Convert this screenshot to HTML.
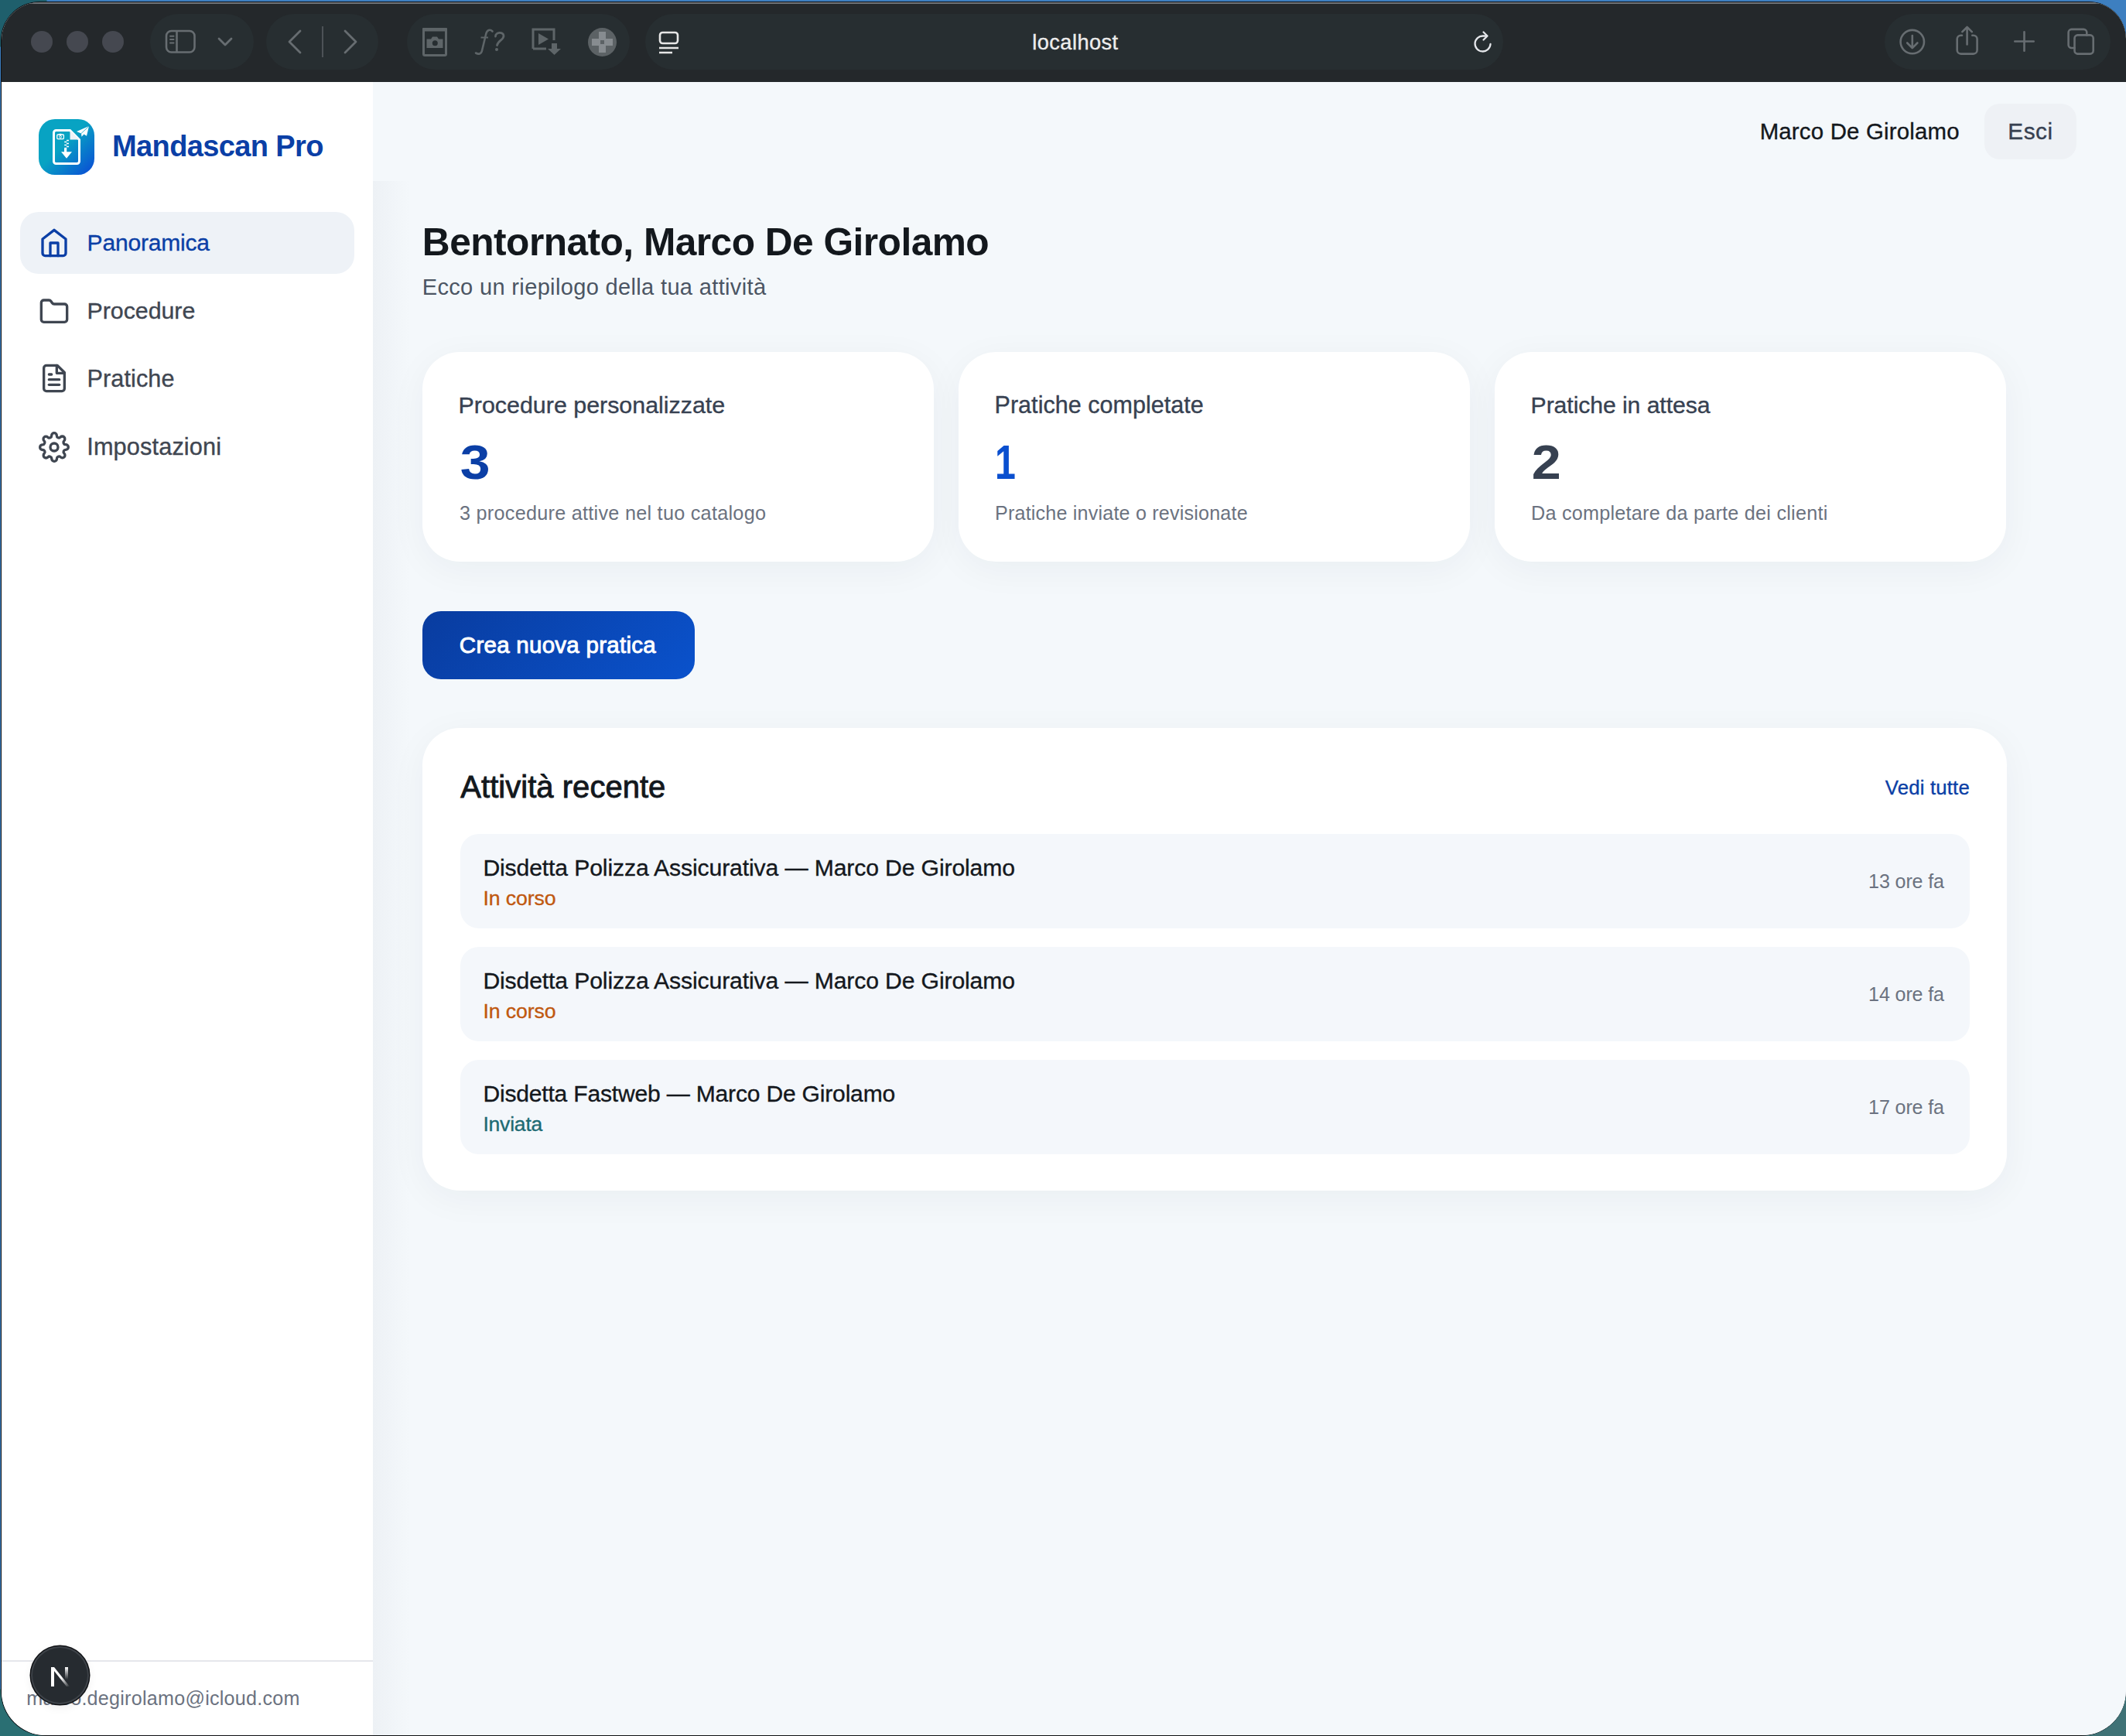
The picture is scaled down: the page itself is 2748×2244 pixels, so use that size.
<!DOCTYPE html>
<html><head><meta charset="utf-8"><style>
*{margin:0;padding:0;box-sizing:border-box}
html,body{width:2748px;height:2244px;overflow:hidden}
body{position:relative;font-family:"Liberation Sans",sans-serif;background:#0e1013}
.abs{position:absolute}
.t{position:absolute;white-space:nowrap}
#desk{position:absolute;inset:0;background:
 radial-gradient(circle at 0 0,#1f5f6c 0,#1f5f6c 60px,transparent 61px),
 radial-gradient(circle at 0 100%,#2a6f73 0,#2a6f73 60px,transparent 61px),
 radial-gradient(circle at 100% 100%,#3f7276 0,#3f7276 60px,transparent 61px),
 #3d7fc0}
#win{position:absolute;left:1px;top:2px;width:2747px;height:2242px;border-radius:50px 48px 58px 58px;overflow:hidden;background:#0e1013;}
#inner{position:absolute;left:1px;top:1px;right:0;bottom:1px;border-radius:49px 47px 57px 57px;overflow:hidden;background:#f4f7fa}
#pg{position:absolute;left:-2px;top:-3px;width:2748px;height:2244px}
#toolbar{position:absolute;left:0;top:0;width:2748px;height:106px;background:#24282b}
#tbline{position:absolute;left:0;top:3px;width:2748px;height:1.5px;background:#6f7377}
#side{position:absolute;left:0;top:106px;width:482px;height:2140px;background:#ffffff}
#main{position:absolute;left:482px;top:106px;width:2266px;height:2140px;background:#f4f8fb}
#mhead{display:none}
#mshade{position:absolute;left:482px;top:234px;width:48px;height:2010px;background:linear-gradient(90deg,#edf1f5,rgba(244,248,251,0))}
.card{background:#fff;box-shadow:0 10px 48px rgba(30,41,59,.047)}
</style></head><body>
<div id="desk"></div>
<div id="win"><div id="inner"><div id="pg">
<div id="toolbar"></div><div id="tbline"></div>
<div class="abs" style="left:194px;top:18px;width:134px;height:72px;border-radius:36.0px;background:#272e31"></div><div class="abs" style="left:344px;top:18px;width:145px;height:72px;border-radius:36.0px;background:#272e31"></div><div class="abs" style="left:526px;top:18px;width:288px;height:72px;border-radius:36.0px;background:#272e31"></div><div class="abs" style="left:834px;top:18px;width:1109px;height:72px;border-radius:36.0px;background:#272e31"></div><div class="abs" style="left:2436px;top:18px;width:292px;height:72px;border-radius:36.0px;background:#272e31"></div><div class="abs" style="left:40px;top:40px;width:28px;height:28px;border-radius:50%;background:#454850"></div><div class="abs" style="left:86px;top:40px;width:28px;height:28px;border-radius:50%;background:#454850"></div><div class="abs" style="left:132px;top:40px;width:28px;height:28px;border-radius:50%;background:#454850"></div><svg class="abs" style="left:212px;top:36px;" width="42" height="34" viewBox="0 0 42 34" fill="none"><rect x="3" y="4" width="36.5" height="27.5" rx="6.5" stroke="#676d71" stroke-width="2.6"/><line x1="16.5" y1="4" x2="16.5" y2="31" stroke="#676d71" stroke-width="2.6"/><path d="M8 10.7h4.5M8 14.9h4.5M8 19.4h4.5" stroke="#676d71" stroke-width="2" stroke-linecap="round"/></svg><svg class="abs" style="left:280px;top:47px;" width="22" height="15" viewBox="0 0 22 15" fill="none"><path d="M3 3l8 8 8-8" stroke="#676d71" stroke-width="2.8" stroke-linecap="round" stroke-linejoin="round"/></svg><svg class="abs" style="left:370px;top:37px;" width="22" height="34" viewBox="0 0 22 34" fill="none"><path d="M18 3L4 17l14 14" stroke="#676d71" stroke-width="2.8" stroke-linecap="round" stroke-linejoin="round"/></svg><div class="abs" style="left:416px;top:34px;width:1.5px;height:40px;background:#4d5257"></div><svg class="abs" style="left:442px;top:37px;" width="22" height="34" viewBox="0 0 22 34" fill="none"><path d="M4 3l14 14L4 31" stroke="#676d71" stroke-width="2.8" stroke-linecap="round" stroke-linejoin="round"/></svg><svg class="abs" style="left:544px;top:34px;" width="36" height="40" viewBox="0 0 36 40" fill="none"><rect x="3.5" y="3.5" width="29" height="34" rx="1.5" stroke="#5e6568" stroke-width="3"/><rect x="2" y="2" width="32" height="4.5" rx="1" fill="#5e6568"/><path d="M7.5 16.5h5.5l2-3h6l2 3h5.5v11.5H7.5z" fill="#5e6568"/><circle cx="18.3" cy="21.8" r="3.5" fill="#272e31"/></svg><svg class="abs" style="left:600px;top:30px;" width="65" height="48" viewBox="0 0 65 48" fill="none"><path d="M36.5 10.5C33.5 7.5 29.5 8.5 28.3 13.5L23 35.5C22 40 18.5 40.5 15 38.5" stroke="#5e6568" stroke-width="2.6" stroke-linecap="round"/><path d="M21.5 18.5H31" stroke="#5e6568" stroke-width="2"/><path d="M40.5 17C40 11.5 51 10.5 51 16.5C51 21.5 43.5 22.5 42.5 28.5" stroke="#5e6568" stroke-width="2.8" stroke-linecap="round"/><circle cx="42" cy="34" r="2" fill="#5e6568"/></svg><svg class="abs" style="left:686px;top:34px;" width="42" height="40" viewBox="0 0 42 40" fill="none"><path d="M3 29V4h27v14" stroke="#5e6568" stroke-width="3"/><path d="M3 29h17" stroke="#5e6568" stroke-width="3"/><path d="M10 9v15l13-7.5z" fill="#5e6568"/><path d="M27 22h7v7h5l-8.5 8-8.5-8h5z" fill="#5e6568"/></svg><svg class="abs" style="left:759px;top:35px;" width="39" height="39" viewBox="0 0 39 39" fill="none"><circle cx="19.5" cy="19.5" r="18.5" fill="#5c6265"/><path d="M15 6h9v9h9v9h-9v9h-9v-9H6v-9h9z" fill="#878c90"/><rect x="17" y="17" width="5" height="5" fill="#5c6265"/></svg><svg class="abs" style="left:851px;top:40px;" width="27" height="30" viewBox="0 0 27 30" fill="none"><rect x="2" y="2" width="23" height="14" rx="3.5" stroke="#e6e6e6" stroke-width="2.6"/><path d="M1 22h25M1 28h17" stroke="#e6e6e6" stroke-width="2.4"/></svg><div class="t" style="left:1334.23px;top:41px;font-size:27.24px;line-height:27.24px;font-weight:400;letter-spacing:0.431px;color:#ededed;-webkit-text-stroke:0.35px currentColor;">localhost</div><svg class="abs" style="left:1903px;top:38px;" width="30" height="32" viewBox="0 0 30 32" fill="none"><path d="M23.5 19a10 10 0 1 1-9.5-10.5h4.5" stroke="#e4e6ea" stroke-width="2.3" stroke-linecap="round"/><path d="M14.5 3.5l5 5-5 5" stroke="#e4e6ea" stroke-width="2.3" stroke-linecap="round" stroke-linejoin="round"/></svg><svg class="abs" style="left:2440px;top:25px" width="300" height="60" viewBox="2440 25 300 60" fill="none" stroke="#676d71" stroke-width="2.6" stroke-linecap="round" stroke-linejoin="round">
<circle cx="2471.8" cy="54.1" r="15.2"/><path d="M2471.8 46v15.5M2465.2 55.5l6.6 6.6 6.6-6.6"/>
<path d="M2536 45.7h-1.5a4.8 4.8 0 0 0-4.8 4.8v14.3a4.8 4.8 0 0 0 4.8 4.8h16.3a4.8 4.8 0 0 0 4.8-4.8V50.5a4.8 4.8 0 0 0-4.8-4.8h-1.5"/>
<path d="M2542.6 57.5V35M2536.4 41.2l6.2-6.2 6.2 6.2"/>
<path d="M2616.5 41.3v24.4M2604.3 53.5h24.4"/>
<path d="M2681.5 62H2677.6a4 4 0 0 1-4-4V41.9a4 4 0 0 1 4-4h15.7a4 4 0 0 1 4 4v3.5"/>
<rect x="2681.5" y="45.4" width="24.2" height="24.2" rx="4"/>
</svg>
<div id="side"></div><div id="main"></div><div id="mhead"></div><div id="mshade"></div>
<svg class="abs" style="left:50px;top:154px" width="72" height="72" viewBox="0 0 72 72">
<defs><linearGradient id="lg" x1="0" y1="0" x2="1" y2="1"><stop offset="0.45" stop-color="#08a3c3"/><stop offset="1" stop-color="#0a48d6"/></linearGradient></defs>
<rect width="72" height="72" rx="21" fill="url(#lg)"/>
<path d="M22.5 14.5h18L52.5 26.5v28a3 3 0 0 1-3 3H22.5a3 3 0 0 1-3-3V17.5a3 3 0 0 1 3-3z" fill="none" stroke="#fff" stroke-width="3"/>
<path d="M40.5 14.5v12h12z" fill="#eef2f6"/>
<rect x="23.8" y="20" width="8.6" height="5.6" rx="1" fill="none" stroke="#fff" stroke-width="1.3"/><rect x="26.5" y="18.8" width="3" height="1.6" fill="#fff"/><circle cx="28.1" cy="22.8" r="1.4" fill="none" stroke="#fff" stroke-width="1"/>
<path d="M36 27.5h3M33.2 29.5h3M36 31.5h3M33.2 33.5h3M36 35.5h3M33.2 37.5h3" stroke="#fff" stroke-width="1.6"/>
<path d="M33 38h3.2v4.3h6.8l-7 8.5-7-8.5h4z" fill="#fff"/>
<path d="M65 9L49 16l6 2.5 0.5 4.2 3-3.2 3.5 2.3z" fill="#fff"/><path d="M65 9L55 18.5" stroke="#08a3c3" stroke-width="0.8"/>
</svg><div class="t" style="left:145.03px;top:170px;font-size:38.06px;line-height:38.06px;font-weight:700;letter-spacing:-0.647px;color:#0b3fa6;">Mandascan Pro</div><div class="abs" style="left:26px;top:274px;width:432px;height:80px;border-radius:24px;background:#eef2f7"></div><svg class="abs" style="left:50px;top:294px" width="40" height="40" viewBox="0 0 24 24" fill="none" stroke="#0b3fa6" stroke-width="2" stroke-linecap="round" stroke-linejoin="round"><path d="m3 9 9-7 9 7v11a2 2 0 0 1-2 2H5a2 2 0 0 1-2-2z"/><polyline points="9 22 9 12 15 12 15 22"/></svg><svg class="abs" style="left:50px;top:383px" width="40" height="40" viewBox="0 0 24 24" fill="none" stroke="#3f4651" stroke-width="2" stroke-linecap="round" stroke-linejoin="round"><path d="M4 20h16a2 2 0 0 0 2-2V8a2 2 0 0 0-2-2h-7.93a2 2 0 0 1-1.66-.9l-.82-1.2A2 2 0 0 0 7.93 3H4a2 2 0 0 0-2 2v13c0 1.1.9 2 2 2Z"/></svg><svg class="abs" style="left:50px;top:469px" width="40" height="40" viewBox="0 0 24 24" fill="none" stroke="#3f4651" stroke-width="2" stroke-linecap="round" stroke-linejoin="round"><path d="M14.5 2H6a2 2 0 0 0-2 2v16a2 2 0 0 0 2 2h12a2 2 0 0 0 2-2V7.5L14.5 2z"/><polyline points="14 2 14 8 20 8"/><line x1="16" y1="13" x2="8" y2="13"/><line x1="16" y1="17" x2="8" y2="17"/><line x1="10" y1="9" x2="8" y2="9"/></svg><svg class="abs" style="left:50px;top:558px" width="40" height="40" viewBox="0 0 24 24" fill="none" stroke="#3f4651" stroke-width="2" stroke-linecap="round" stroke-linejoin="round"><circle cx="12" cy="12" r="3"/><path d="M19.4 15a1.650 1.650 0 0 0 .33 1.82l.06.06a2 2 0 0 1 0 2.83 2 2 0 0 1-2.83 0l-.06-.06a1.65 1.65 0 0 0-1.820-.33 1.65 1.65 0 0 0-1 1.51V21a2 2 0 0 1-2 2 2 2 0 0 1-2-2v-.09A1.65 1.65 0 0 0 9 19.4a1.65 1.65 0 0 0-1.82.33l-.06.06a2 2 0 0 1-2.83 0 2 2 0 0 1 0-2.83l.06-.06a1.65 1.65 0 0 0 .33-1.82 1.65 1.65 0 0 0-1.51-1H3a2 2 0 0 1-2-2 2 2 0 0 1 2-2h.09A1.65 1.65 0 0 0 4.6 9a1.65 1.65 0 0 0-.33-1.82l-.06-.06a2 2 0 0 1 0-2.83 2 2 0 0 1 2.83 0l.06.06a1.65 1.65 0 0 0 1.82.33H9a1.65 1.65 0 0 0 1-1.51V3a2 2 0 0 1 2-2 2 2 0 0 1 2 2v.09a1.65 1.65 0 0 0 1 1.51 1.65 1.65 0 0 0 1.82-.33l.06-.06a2 2 0 0 1 2.83 0 2 2 0 0 1 0 2.830l-.06.06a1.65 1.65 0 0 0-.33 1.82V9a1.65 1.65 0 0 0 1.51 1H21a2 2 0 0 1 2 2 2 2 0 0 1-2 2h-.09a1.65 1.65 0 0 0-1.51 1z"/></svg><div class="t" style="left:112.60px;top:299px;font-size:30.06px;line-height:30.06px;font-weight:400;letter-spacing:-0.218px;color:#0b3fa6;-webkit-text-stroke:0.35px currentColor;">Panoramica</div><div class="t" style="left:112.57px;top:387px;font-size:30.36px;line-height:30.36px;font-weight:400;letter-spacing:-0.040px;color:#3f4651;-webkit-text-stroke:0.35px currentColor;">Procedure</div><div class="t" style="left:112.55px;top:474px;font-size:30.61px;line-height:30.61px;font-weight:400;letter-spacing:0.092px;color:#3f4651;-webkit-text-stroke:0.35px currentColor;">Pratiche</div><div class="t" style="left:112.24px;top:563px;font-size:30.71px;line-height:30.71px;font-weight:400;letter-spacing:0.134px;color:#3f4651;-webkit-text-stroke:0.35px currentColor;">Impostazioni</div><div class="abs" style="left:2px;top:2146px;width:480px;height:2px;background:#e5e7eb"></div><div class="t" style="left:34.37px;top:2183px;font-size:25.12px;line-height:25.12px;font-weight:400;letter-spacing:0.254px;color:#6b7280;">marco.degirolamo@icloud.com</div><div class="abs" style="left:40px;top:2128px;width:75px;height:75px;border-radius:50%;background:#262b30;box-shadow:0 0 0 1.5px #0d0f12, inset 0 0 0 2px #3d4248, 0 4px 12px rgba(0,0,0,.08)"></div>
<svg class="abs" style="left:64px;top:2154px" width="28" height="28" viewBox="0 0 28 28"><defs><linearGradient id="ng" x1="0" y1="0" x2="0" y2="1"><stop offset="0" stop-color="#fff"/><stop offset="1" stop-color="#fff" stop-opacity="0"/></linearGradient><linearGradient id="ng2" x1="0" y1="0" x2="1" y2="1"><stop offset=".55" stop-color="#fff"/><stop offset="1" stop-color="#fff" stop-opacity="0"/></linearGradient></defs>
<rect x="2" y="1" width="4" height="25" fill="#fff"/><rect x="20" y="1" width="4" height="16" fill="url(#ng)"/><path d="M2 1h4l20 25h-4z" fill="url(#ng2)"/></svg>
<div class="t" style="left:2274.65px;top:155px;font-size:29.38px;line-height:29.38px;font-weight:400;letter-spacing:0.206px;color:#14181d;-webkit-text-stroke:0.35px currentColor;">Marco De Girolamo</div><div class="abs" style="left:2565px;top:134px;width:119px;height:72px;border-radius:20px;background:#eef1f5"></div><div class="t" style="left:2595.32px;top:155px;font-size:29.81px;line-height:29.81px;font-weight:400;letter-spacing:0.477px;color:#374151;-webkit-text-stroke:0.35px currentColor;">Esci</div><div class="t" style="left:545.87px;top:289px;font-size:49.7px;line-height:49.7px;font-weight:700;letter-spacing:-0.547px;color:#13181d;">Bentornato, Marco De Girolamo</div><div class="t" style="left:545.68px;top:357px;font-size:29.05px;line-height:29.05px;font-weight:400;letter-spacing:0.332px;color:#4b5563;">Ecco un riepilogo della tua attività</div><div class="card abs" style="left:546px;top:455px;width:661px;height:271px;border-radius:48px"></div><div class="t" style="left:592.57px;top:508px;font-size:30.42px;line-height:30.42px;font-weight:400;letter-spacing:-0.007px;color:#374151;-webkit-text-stroke:0.35px currentColor;">Procedure personalizzate</div><div class="t" style="left:594.61px;top:566px;font-size:63.5px;line-height:63.5px;font-weight:700;letter-spacing:0.000px;color:#0b3fa6;transform:scaleX(1.098);transform-origin:1.59px 0;">3</div><div class="t" style="left:593.99px;top:651px;font-size:25.22px;line-height:25.22px;font-weight:400;letter-spacing:0.265px;color:#6b7280;">3 procedure attive nel tuo catalogo</div><div class="card abs" style="left:1239px;top:455px;width:661px;height:271px;border-radius:48px"></div><div class="t" style="left:1285.56px;top:508px;font-size:30.51px;line-height:30.51px;font-weight:400;letter-spacing:0.037px;color:#374151;-webkit-text-stroke:0.35px currentColor;">Pratiche completate</div><div class="t" style="left:1285.19px;top:566px;font-size:63.5px;line-height:63.5px;font-weight:700;letter-spacing:0.000px;color:#0a4fcf;transform:scaleX(0.761);transform-origin:3.81px 0;">1</div><div class="t" style="left:1285.99px;top:651px;font-size:25.1px;line-height:25.1px;font-weight:400;letter-spacing:0.202px;color:#6b7280;">Pratiche inviate o revisionate</div><div class="card abs" style="left:1932px;top:455px;width:661px;height:271px;border-radius:48px"></div><div class="t" style="left:1978.58px;top:509px;font-size:30.23px;line-height:30.23px;font-weight:400;letter-spacing:-0.092px;color:#374151;-webkit-text-stroke:0.35px currentColor;">Pratiche in attesa</div><div class="t" style="left:1979.78px;top:566px;font-size:63.5px;line-height:63.5px;font-weight:700;letter-spacing:0.000px;color:#374151;transform:scaleX(1.076);transform-origin:2.22px 0;">2</div><div class="t" style="left:1978.98px;top:651px;font-size:25.19px;line-height:25.19px;font-weight:400;letter-spacing:0.246px;color:#6b7280;">Da completare da parte dei clienti</div><div class="abs" style="left:546px;top:790px;width:352px;height:88px;border-radius:24px;background:linear-gradient(135deg,#093c9f 0%,#0a52cc 100%)"></div><div class="t" style="left:593.82px;top:819px;font-size:29.52px;line-height:29.52px;font-weight:400;letter-spacing:0.261px;color:#ffffff;-webkit-text-stroke:0.9px currentColor;">Crea nuova pratica</div><div class="card abs" style="left:546px;top:941px;width:2048px;height:598px;border-radius:48px"></div><div class="t" style="left:595.30px;top:998px;font-size:39.97px;line-height:39.97px;font-weight:400;letter-spacing:0.046px;color:#13181d;-webkit-text-stroke:0.9px currentColor;">Attività recente</div><div class="t" style="left:2436.87px;top:1006px;font-size:25.74px;line-height:25.74px;font-weight:400;letter-spacing:0.172px;color:#0b3fa6;-webkit-text-stroke:0.35px currentColor;">Vedi tutte</div><div class="abs" style="left:594.5px;top:1078px;width:1951px;height:121.5px;border-radius:24px;background:#f4f7fb"></div><div class="t" style="left:624.39px;top:1107px;font-size:30.16px;line-height:30.16px;font-weight:400;letter-spacing:-0.129px;color:#14181d;-webkit-text-stroke:0.35px currentColor;">Disdetta Polizza Assicurativa — Marco De Girolamo</div><div class="t" style="left:624.40px;top:1148px;font-size:26.7px;line-height:26.7px;font-weight:400;letter-spacing:-0.121px;color:#c0580f;-webkit-text-stroke:0.35px currentColor;">In corso</div><div class="t" style="left:2415.12px;top:1127px;font-size:25.08px;line-height:25.08px;font-weight:400;letter-spacing:-0.132px;color:#6b7280;">13 ore fa</div><div class="abs" style="left:594.5px;top:1224px;width:1951px;height:121.5px;border-radius:24px;background:#f4f7fb"></div><div class="t" style="left:624.39px;top:1253px;font-size:30.16px;line-height:30.16px;font-weight:400;letter-spacing:-0.129px;color:#14181d;-webkit-text-stroke:0.35px currentColor;">Disdetta Polizza Assicurativa — Marco De Girolamo</div><div class="t" style="left:624.40px;top:1294px;font-size:26.7px;line-height:26.7px;font-weight:400;letter-spacing:-0.121px;color:#c0580f;-webkit-text-stroke:0.35px currentColor;">In corso</div><div class="t" style="left:2415.12px;top:1273px;font-size:25.08px;line-height:25.08px;font-weight:400;letter-spacing:-0.132px;color:#6b7280;">14 ore fa</div><div class="abs" style="left:594.5px;top:1370px;width:1951px;height:121.5px;border-radius:24px;background:#f4f7fb"></div><div class="t" style="left:624.40px;top:1399px;font-size:30.06px;line-height:30.06px;font-weight:400;letter-spacing:-0.187px;color:#14181d;-webkit-text-stroke:0.35px currentColor;">Disdetta Fastweb — Marco De Girolamo</div><div class="t" style="left:624.41px;top:1440px;font-size:26.52px;line-height:26.52px;font-weight:400;letter-spacing:-0.206px;color:#1d6a73;-webkit-text-stroke:0.35px currentColor;">Inviata</div><div class="t" style="left:2415.12px;top:1419px;font-size:25.08px;line-height:25.08px;font-weight:400;letter-spacing:-0.132px;color:#6b7280;">17 ore fa</div>
</div></div></div>
</body></html>
